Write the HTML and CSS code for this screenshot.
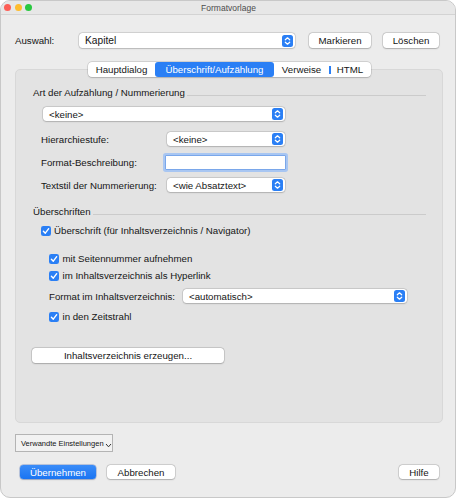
FILE: index.html
```html
<!DOCTYPE html>
<html lang="de">
<head>
<meta charset="utf-8">
<title>Formatvorlage</title>
<link rel="stylesheet" href="styles.css">
</head>
<body>
<div class="window">
  <div class="titlebar">
    <div class="lights">
      <span class="light red"></span>
      <span class="light yellow"></span>
      <span class="light green"></span>
    </div>
    <div class="title">Formatvorlage</div>
    <div></div>
  </div>

  <div class="content">
    <div class="top-row">
      <span class="auswahl-label">Auswahl:</span>
      <div class="select select-main">
        <span>Kapitel</span>
        <svg class="arrows" viewBox="0 0 11 12" width="11" height="12"><rect width="11" height="12" rx="2.5" fill="#2a7ff5"/><path d="M3.3 4.8 L5.5 2.8 L7.7 4.8 M3.3 7.2 L5.5 9.2 L7.7 7.2" fill="none" stroke="#fff" stroke-width="1.2" stroke-linecap="round" stroke-linejoin="round"/></svg>
      </div>
      <button class="btn btn-mark">Markieren</button>
      <button class="btn btn-del">Löschen</button>
    </div>

    <div class="tabs">
      <span class="tab">Hauptdialog</span>
      <span class="tab active">Überschrift/Aufzählung</span>
      <span class="tab">Verweise</span>
      <span class="tab tab-html">HTML</span>
    </div>

    <div class="panel">
      <div class="group-title">Art der Aufzählung / Nummerierung</div>
      <div class="select select-art">
        <span>&lt;keine&gt;</span>
        <svg class="arrows" viewBox="0 0 11 12" width="11" height="12"><rect width="11" height="12" rx="2.5" fill="#2a7ff5"/><path d="M3.3 4.8 L5.5 2.8 L7.7 4.8 M3.3 7.2 L5.5 9.2 L7.7 7.2" fill="none" stroke="#fff" stroke-width="1.2" stroke-linecap="round" stroke-linejoin="round"/></svg>
      </div>

      <div class="form-row row-hier">
        <span class="form-label">Hierarchiestufe:</span>
        <div class="select select-small">
          <span>&lt;keine&gt;</span>
          <svg class="arrows" viewBox="0 0 11 12" width="11" height="12"><rect width="11" height="12" rx="2.5" fill="#2a7ff5"/><path d="M3.3 4.8 L5.5 2.8 L7.7 4.8 M3.3 7.2 L5.5 9.2 L7.7 7.2" fill="none" stroke="#fff" stroke-width="1.2" stroke-linecap="round" stroke-linejoin="round"/></svg>
        </div>
      </div>

      <div class="form-row row-fmt">
        <span class="form-label">Format-Beschreibung:</span>
        <div class="text-input"></div>
      </div>

      <div class="form-row row-stil">
        <span class="form-label">Textstil der Nummerierung:</span>
        <div class="select select-small">
          <span>&lt;wie Absatztext&gt;</span>
          <svg class="arrows" viewBox="0 0 11 12" width="11" height="12"><rect width="11" height="12" rx="2.5" fill="#2a7ff5"/><path d="M3.3 4.8 L5.5 2.8 L7.7 4.8 M3.3 7.2 L5.5 9.2 L7.7 7.2" fill="none" stroke="#fff" stroke-width="1.2" stroke-linecap="round" stroke-linejoin="round"/></svg>
        </div>
      </div>

      <div class="group-title group-2">Überschriften</div>

      <div class="check check-1">
        <svg class="cb" viewBox="0 0 10 10" width="10" height="10"><rect width="10" height="10" rx="2.3" fill="#2a7ff5"/><path d="M2.4 5.2 L4.3 7.2 L7.7 2.7" fill="none" stroke="#fff" stroke-width="1.4" stroke-linecap="round" stroke-linejoin="round"/></svg>
        <span>Überschrift (für Inhaltsverzeichnis / Navigator)</span>
      </div>

      <div class="check check-sub check-2">
        <svg class="cb" viewBox="0 0 10 10" width="10" height="10"><rect width="10" height="10" rx="2.3" fill="#2a7ff5"/><path d="M2.4 5.2 L4.3 7.2 L7.7 2.7" fill="none" stroke="#fff" stroke-width="1.4" stroke-linecap="round" stroke-linejoin="round"/></svg>
        <span>mit Seitennummer aufnehmen</span>
      </div>

      <div class="check check-sub check-3">
        <svg class="cb" viewBox="0 0 10 10" width="10" height="10"><rect width="10" height="10" rx="2.3" fill="#2a7ff5"/><path d="M2.4 5.2 L4.3 7.2 L7.7 2.7" fill="none" stroke="#fff" stroke-width="1.4" stroke-linecap="round" stroke-linejoin="round"/></svg>
        <span>im Inhaltsverzeichnis als Hyperlink</span>
      </div>

      <div class="form-row row-toc">
        <span class="form-label toc-label">Format im Inhaltsverzeichnis:</span>
        <div class="select select-toc">
          <span>&lt;automatisch&gt;</span>
          <svg class="arrows" viewBox="0 0 11 12" width="11" height="12"><rect width="11" height="12" rx="2.5" fill="#2a7ff5"/><path d="M3.3 4.8 L5.5 2.8 L7.7 4.8 M3.3 7.2 L5.5 9.2 L7.7 7.2" fill="none" stroke="#fff" stroke-width="1.2" stroke-linecap="round" stroke-linejoin="round"/></svg>
        </div>
      </div>

      <div class="check check-sub check-4">
        <svg class="cb" viewBox="0 0 10 10" width="10" height="10"><rect width="10" height="10" rx="2.3" fill="#2a7ff5"/><path d="M2.4 5.2 L4.3 7.2 L7.7 2.7" fill="none" stroke="#fff" stroke-width="1.4" stroke-linecap="round" stroke-linejoin="round"/></svg>
        <span>in den Zeitstrahl</span>
      </div>

      <button class="btn btn-toc">Inhaltsverzeichnis erzeugen...</button>
    </div>

    <div class="related">
      <span>Verwandte Einstellungen</span>
      <svg class="chev" viewBox="0 0 7 5" width="7" height="5"><path d="M1 1 L3.5 3.8 L6 1" fill="none" stroke="#333" stroke-width="1"/></svg>
    </div>

    <div class="actions">
      <button class="btn btn-primary">Übernehmen</button>
      <button class="btn btn-cancel">Abbrechen</button>
      <button class="btn btn-help">Hilfe</button>
    </div>
  </div>
</div>
</body>
</html>
```

FILE: styles.css
```css
body {
  margin: 0;
  background: #ffffff;
  font-family: "Liberation Sans", Arial, sans-serif;
  font-size: 9.7px;
  color: #151515;
}

.window {
  width: 456px;
  height: 498px;
  box-sizing: border-box;
  border: 1px solid #c8c8c8;
  border-radius: 10px;
  background: #ececec;
  overflow: hidden;
  display: flex;
  flex-direction: column;
}

.titlebar {
  height: 13px;
  border-bottom: 1px solid #d3d3d3;
  background: #e7e7e7;
  display: grid;
  grid-template-columns: 1fr auto 1fr;
  align-items: center;
}

.lights {
  display: flex;
  gap: 3.7px;
  padding-left: 3px;
}

.light {
  width: 7px;
  height: 7px;
  border-radius: 50%;
}

.red { background: #fd5f57; }
.yellow { background: #febc2e; }
.green { background: #29c840; }

.title {
  font-size: 8.5px;
  color: #4c4c4c;
  padding-left: 1px;
}

.content {
  padding: 18px 12px 0 14px;
  display: flex;
  flex-direction: column;
}

.top-row {
  display: flex;
  align-items: center;
  height: 15px;
}

.auswahl-label {
  width: 64px;
}

.select {
  box-sizing: border-box;
  height: 14px;
  background: #ffffff;
  border-radius: 3.5px;
  box-shadow: 0 0 0 0.5px rgba(0, 0, 0, 0.18), 0 0.5px 1.5px rgba(0, 0, 0, 0.15);
  display: flex;
  align-items: center;
  justify-content: space-between;
  padding: 0 2px 0 6px;
}

.arrows {
  display: block;
  flex: none;
}

.select-main {
  width: 216px;
  height: 15px;
  padding-left: 6px;
  font-size: 10.2px;
}

.btn {
  box-sizing: border-box;
  font-family: inherit;
  font-size: 9.7px;
  color: #151515;
  background: #ffffff;
  border: none;
  border-radius: 3.5px;
  box-shadow: 0 0 0 0.5px rgba(0, 0, 0, 0.2), 0 0.5px 1.5px rgba(0, 0, 0, 0.18);
  height: 15px;
  padding: 0;
  display: flex;
  align-items: center;
  justify-content: center;
}

.btn-mark {
  width: 62px;
  margin-left: 14px;
}

.btn-del {
  width: 56px;
  margin-left: 12px;
}

.tabs {
  margin-top: 14px;
  margin-bottom: -8px;
  align-self: center;
  margin-left: 1px;
  display: flex;
  height: 15px;
  background: #ffffff;
  border-radius: 4px;
  box-shadow: 0 0 0 0.5px rgba(0, 0, 0, 0.18), 0 0.5px 1.5px rgba(0, 0, 0, 0.15);
  position: relative;
  z-index: 1;
}

.tab {
  display: flex;
  align-items: center;
  justify-content: center;
  height: 15px;
  box-sizing: border-box;
}

.tab:nth-child(1) { width: 67px; }
.tab:nth-child(2) { width: 119px; }
.tab:nth-child(3) { width: 55px; }
.tab:nth-child(4) { width: 42px; }

.tab.active {
  background: #2a7ff5;
  color: #ffffff;
  border-radius: 3px;
}

.tab-html {
  position: relative;
}

.tab-html::before {
  content: "";
  position: absolute;
  left: 0;
  top: 4px;
  width: 1.5px;
  height: 8px;
  background: #2a7ff5;
}

.panel {
  box-sizing: border-box;
  border: 1px solid #d8d8d8;
  border-radius: 5px;
  background: #e3e3e3;
  padding: 17px 16px 59px 17px;
  display: flex;
  flex-direction: column;
  align-items: flex-start;
}

.group-title {
  align-self: stretch;
  line-height: 12px;
  display: flex;
  align-items: center;
}

.group-title::after {
  content: "";
  flex: 1;
  height: 1px;
  background: #cbcbcb;
  margin-top: 5px;
  margin-left: 2px;
}

.select-art {
  margin-top: 8px;
  margin-left: 10px;
  width: 242px;
}

.form-row {
  display: flex;
  align-items: center;
  margin-left: 8px;
}

.form-label {
  width: 126px;
}

.row-hier {
  margin-top: 11px;
  height: 14px;
}

.select-small {
  width: 118px;
}

.row-fmt {
  margin-top: 9px;
  height: 15px;
}

.text-input {
  box-sizing: border-box;
  width: 121px;
  height: 15px;
  margin-left: -2px;
  background: #ffffff;
  border: 1px solid #7aa7ea;
  box-shadow: 0 0 0 2px #a8c6f2;
  border-radius: 1px;
}

.row-stil {
  margin-top: 8px;
  height: 14px;
}

.group-2 {
  margin-top: 14px;
}

.check {
  display: flex;
  align-items: center;
  gap: 3px;
  line-height: 12px;
  margin-left: 8px;
}

.cb {
  display: block;
  flex: none;
}

.check-1 { margin-top: 7px; }

.check-sub {
  margin-left: 16px;
  gap: 3.5px;
}

.check-2 { margin-top: 16px; }
.check-3 { margin-top: 5px; }

.row-toc {
  margin-top: 7px;
  margin-left: 16px;
  height: 14px;
}

.toc-label {
  width: 134px;
}

.select-toc {
  width: 224px;
}

.check-4 { margin-top: 8px; }

.btn-toc {
  margin-top: 25px;
  margin-left: -1px;
  width: 192px;
}

.related {
  margin-top: 11px;
  margin-left: 0;
  width: 98px;
  height: 18px;
  box-sizing: border-box;
  border: 1px solid #b4b4b4;
  background: #f2f2f2;
  font-size: 7.5px;
  color: #151515;
  display: flex;
  align-items: center;
  padding-left: 5px;
  gap: 1px;
}

.chev {
  display: block;
  margin-top: 5px;
}

.actions {
  margin-top: 13px;
  display: flex;
  align-items: center;
}

.btn-primary {
  margin-left: 5px;
  width: 76px;
  height: 14px;
  background: linear-gradient(#3a8cf8, #1a74f2);
  color: #ffffff;
  box-shadow: 0 0 0 0.5px rgba(0, 60, 180, 0.4), 0 0.5px 1.5px rgba(0, 0, 0, 0.18);
}

.btn-cancel {
  margin-left: 11px;
  width: 68px;
  height: 14px;
}

.btn-help {
  margin-left: auto;
  margin-right: 4px;
  width: 40px;
  height: 14px;
}
```
